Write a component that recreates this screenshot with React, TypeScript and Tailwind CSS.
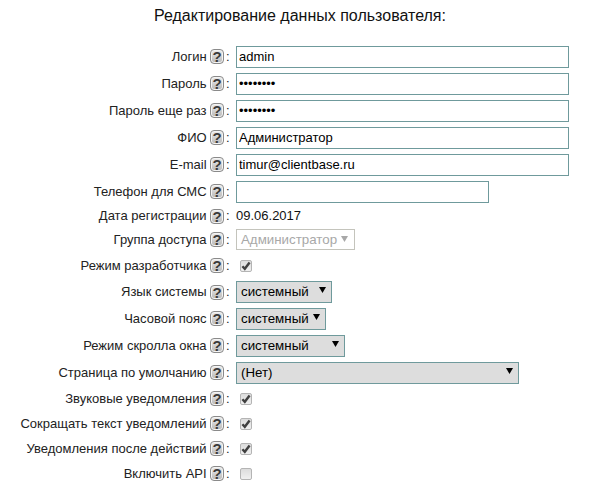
import React from "react";

const font = { fontFamily: '"Liberation Sans", Arial, sans-serif' };

function Help() {
  return (
    <span className="flex h-[15px] w-[14px] items-center justify-center rounded-[4px] border border-[#8a8a8a] bg-gradient-to-b from-[#ececec] to-[#b8b8b8] text-[15px] font-bold leading-none text-[#3a3a3a] shadow-[inset_0_0_0_1px_#f4f4f4]">
      ?
    </span>
  );
}

function Box({ checked }: { checked?: boolean }) {
  return (
    <span className="ml-[4px] flex h-[12px] w-[12px] items-center justify-center rounded-[2px] border border-[#b4b4b4] bg-gradient-to-b from-[#dcdcdc] to-[#f0f0f0]">
      {checked && (
        <svg width="10" height="10" viewBox="0 0 10 10">
          <path d="M1.4 5.2 L3.8 7.8 L8.6 1.6" fill="none" stroke="#404040" strokeWidth="2.4" />
        </svg>
      )}
    </span>
  );
}

function TextField({ value, type = "text", w = "w-[333px]" }: { value: string; type?: string; w?: string }) {
  return (
    <input
      readOnly
      type={type}
      value={value}
      className={`${w} h-[22px] border border-[#6f9a9c] bg-white px-[2px] text-[13px] text-black outline-none`}
      style={font}
    />
  );
}

function Arrow({ color = "#000" }: { color?: string }) {
  return (
    <svg width="7" height="6" viewBox="0 0 7 6" className="absolute right-[6px] top-[6px]">
      <path d="M0 0 H7 L3.5 6 Z" fill={color} />
    </svg>
  );
}

function Sel({ w, text }: { w: string; text: string }) {
  return (
    <span className={`relative block ${w}`}>
      <select
        defaultValue={text}
        className="block h-[22px] w-full appearance-none border border-[#6f9a9c] bg-[#dddddd] pl-[4px] text-[13.33px] text-black"
        style={font}
      >
        <option>{text}</option>
      </select>
      <Arrow />
    </span>
  );
}

const rows: { label: string; h: string; field: React.ReactNode }[] = [
  { label: "Логин", h: "h-[27px]", field: <TextField value="admin" /> },
  { label: "Пароль", h: "h-[27px]", field: <TextField value="12345678" type="password" /> },
  { label: "Пароль еще раз", h: "h-[27px]", field: <TextField value="12345678" type="password" /> },
  { label: "ФИО", h: "h-[27px]", field: <TextField value="Администратор" /> },
  { label: "E-mail", h: "h-[27px]", field: <TextField value="timur@clientbase.ru" /> },
  { label: "Телефон для СМС", h: "h-[27px]", field: <TextField value="" w="w-[253px]" /> },
  { label: "Дата регистрации", h: "h-[22px]", field: <span className="text-[13px] text-[#111]">09.06.2017</span> },
  {
    label: "Группа доступа",
    h: "h-[25px]",
    field: (
      <span className="relative flex h-[21px] w-[119px] items-center border border-[#c4c4bc] pl-[4px] text-[13.33px] text-[#a8a8a8]">
        Администратор
        <Arrow color="#a8a8a8" />
      </span>
    ),
  },
  { label: "Режим разработчика", h: "h-[27px]", field: <Box checked /> },
  { label: "Язык системы", h: "h-[26px]", field: <Sel w="w-[96px]" text="системный" /> },
  { label: "Часовой пояс", h: "h-[27px]", field: <Sel w="w-[90px]" text="системный" /> },
  { label: "Режим скролла окна", h: "h-[27px]", field: <Sel w="w-[109px]" text="системный" /> },
  { label: "Страница по умолчанию", h: "h-[27px]", field: <Sel w="w-[283px]" text="(Нет)" /> },
  { label: "Звуковые уведомления", h: "h-[25px]", field: <Box checked /> },
  { label: "Сокращать текст уведомлений", h: "h-[25px]", field: <Box checked /> },
  { label: "Уведомления после действий", h: "h-[25px]", field: <Box checked /> },
  { label: "Включить API", h: "h-[25px]", field: <Box /> },
];

export default function App() {
  return (
    <div className="h-[489px] w-[600px] overflow-hidden bg-white text-[13px] text-[#222]" style={font}>
      <h1 className="h-[43px] pt-[6px] text-center text-[16px] font-normal leading-[20px] text-[#111]">
        Редактирование данных пользователя:
      </h1>
      {rows.map((r) => (
        <div key={r.label} className={`flex items-center ${r.h}`}>
          <span className="w-[206.6px] text-right">{r.label}</span>
          <span className="ml-[3.4px]"><Help /></span>
          <span className="ml-[2px] w-[10px]">:</span>
          <span className="flex items-center">{r.field}</span>
        </div>
      ))}
    </div>
  );
}
